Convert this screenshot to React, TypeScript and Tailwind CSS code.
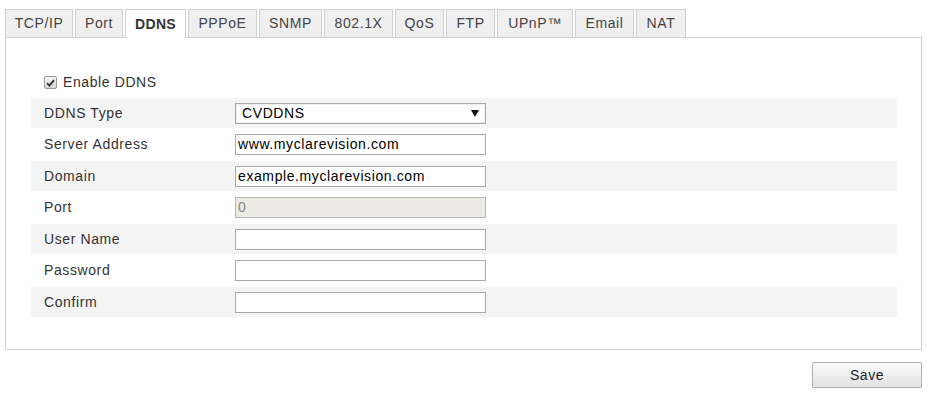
import React from 'react';

const tabs = ['TCP/IP', 'Port', 'DDNS', 'PPPoE', 'SNMP', '802.1X', 'QoS', 'FTP', 'UPnP™', 'Email', 'NAT'];

const tabWidths: Record<string, string> = {
  'TCP/IP': 'w-[68px]',
  Port: 'w-[48px]',
  DDNS: 'w-[61px]',
  PPPoE: 'w-[69px]',
  SNMP: 'w-[63px]',
  '802.1X': 'w-[69px]',
  QoS: 'w-[49px]',
  FTP: 'w-[49px]',
  'UPnP™': 'w-[76px]',
  Email: 'w-[59px]',
  NAT: 'w-[50px]',
};

type Field = {
  label: string;
  kind: 'select' | 'text' | 'disabled';
  value?: string;
};

const fields: Field[] = [
  { label: 'DDNS Type', kind: 'select', value: 'CVDDNS' },
  { label: 'Server Address', kind: 'text', value: 'www.myclarevision.com' },
  { label: 'Domain', kind: 'text', value: 'example.myclarevision.com' },
  { label: 'Port', kind: 'disabled', value: '0' },
  { label: 'User Name', kind: 'text' },
  { label: 'Password', kind: 'text' },
  { label: 'Confirm', kind: 'text' },
];

const FieldControl = ({ field }: { field: Field }) => {
  if (field.kind === 'select') {
    return (
      <div className="flex h-[21px] w-[251px] items-center justify-between border border-[#a9a9a9] bg-white pl-[6px] pr-[6px] text-black shadow-[inset_0_0_0_1px_#f0f0f0]">
        <span>{field.value}</span>
        <svg width="8" height="7" viewBox="0 0 8 7">
          <path d="M0 0 H8 L4 7 Z" fill="#111" />
        </svg>
      </div>
    );
  }
  if (field.kind === 'disabled') {
    return (
      <div className="flex h-[21px] w-[251px] items-center border border-[#b5b5b5] bg-[#ebebe4] px-[2px] text-[#8a8a8a]">
        {field.value}
      </div>
    );
  }
  return (
    <div className="flex h-[21px] w-[251px] items-center border border-[#a9a9a9] bg-white px-[2px] text-black">
      {field.value}
    </div>
  );
};

export default function App() {
  return (
    <div className="min-h-[399px] w-[936px] bg-white pl-[5px] pt-[9px] text-[14px] tracking-[0.6px] text-[#333] font-['Liberation_Sans',Arial,sans-serif]">
      {/* tab strip */}
      <div className="relative z-10 -mb-px flex h-[29px] items-start gap-[2px]">
        {tabs.map((t) => {
          const active = t === 'DDNS';
          return (
            <div
              key={t}
              className={`flex items-center justify-center border border-b-0 border-[#cfcfcf] ${tabWidths[t]} ${
                active ? 'h-[29px] bg-white font-bold tracking-[0.3px] text-[#333]' : 'h-[28px] bg-[#efefef] text-[#444]'
              }`}
            >
              {t}
            </div>
          );
        })}
      </div>

      {/* panel */}
      <div className="h-[313px] w-[917px] border border-[#cfcfcf] bg-white pt-[37px]">
        <div className="flex h-[15px] items-center pl-[38px]">
          <span className="flex h-[13px] w-[13px] items-center justify-center rounded-[2px] border border-[#9a9a9a] bg-gradient-to-b from-[#f4f4f4] to-[#d6d6d6]">
            <svg width="9" height="8" viewBox="0 0 9 8">
              <path d="M1 4.2 L3.4 6.6 L8 1.2" fill="none" stroke="#333" strokeWidth="1.9" />
            </svg>
          </span>
          <span className="ml-[6px]">Enable DDNS</span>
        </div>

        <div className="ml-[25px] mt-[8px] flex w-[866px] flex-col gap-[1.5px]">
          {fields.map((f, i) => (
            <div
              key={f.label}
              className={`flex h-[30px] items-center pl-[13px] ${i % 2 === 0 ? 'bg-[#f4f4f4]' : 'bg-white'}`}
            >
              <div className="w-[191px]">{f.label}</div>
              <FieldControl field={f} />
            </div>
          ))}
        </div>
      </div>

      <div className="flex w-[917px] justify-end pt-[12px]">
        <button className="h-[26px] w-[110px] rounded-[2px] border border-[#acacac] bg-gradient-to-b from-[#fbfbfb] to-[#e2e2e2] text-[14px] tracking-[0.5px] text-[#222]">
          Save
        </button>
      </div>
    </div>
  );
}
